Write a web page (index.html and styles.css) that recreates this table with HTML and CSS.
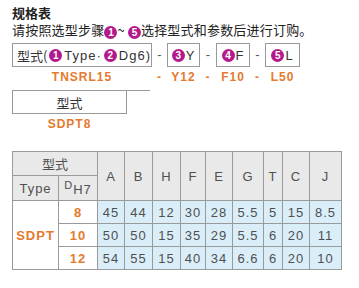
FILE: index.html
```
<!DOCTYPE html>
<html lang="zh">
<head>
<meta charset="utf-8">
<link rel="stylesheet" href="styles.css">
</head>
<body>
<div class="page">
  <div class="title">规格表</div>
  <div class="intro">请按照选型步骤<span class="num">1</span>~ <span class="num">5</span>选择型式和参数后进行订购。</div>
  <div class="order">
    <div class="box box-main">型式(<span class="num">1</span><span class="lat">Type·</span><span class="num">2</span><span class="lat">Dg6)</span></div>
    <div class="dash">-</div>
    <div class="box"><span class="num">3</span><span class="lat">Y</span></div>
    <div class="dash">-</div>
    <div class="box"><span class="num">4</span><span class="lat">F</span></div>
    <div class="dash">-</div>
    <div class="box"><span class="num">5</span><span class="lat">L</span></div>
    <div class="code">TNSRL15</div>
    <div class="code">-</div>
    <div class="code">Y12</div>
    <div class="code">-</div>
    <div class="code">F10</div>
    <div class="code">-</div>
    <div class="code">L50</div>
  </div>
  <div class="example">
    <div class="example-row">
      <div class="box box-type">型式</div>
      <div class="tail"></div>
    </div>
    <div class="code code-ex">SDPT8</div>
  </div>
  <table class="spec">
    <colgroup>
      <col style="width:46px"><col style="width:39px"><col style="width:27px"><col style="width:28px"><col style="width:28px"><col style="width:25px"><col style="width:27px"><col style="width:31px"><col style="width:19px"><col style="width:27px"><col style="width:32px">
    </colgroup>
    <tr class="h1">
      <th colspan="2" class="cjk">型式</th>
      <th rowspan="2">A</th><th rowspan="2">B</th><th rowspan="2">H</th><th rowspan="2">F</th><th rowspan="2">E</th><th rowspan="2">G</th><th rowspan="2">T</th><th rowspan="2">C</th><th rowspan="2">J</th>
    </tr>
    <tr class="h2">
      <th>Type</th>
      <th><span class="d">D</span><span class="sub">H7</span></th>
    </tr>
    <tr>
      <td rowspan="3" class="o">SDPT</td>
      <td class="o">8</td>
      <td class="v">45</td><td class="v">44</td><td class="v">12</td><td class="v">30</td><td class="v">28</td><td class="v">5.5</td><td class="v">5</td><td class="v">15</td><td class="v">8.5</td>
    </tr>
    <tr>
      <td class="o">10</td>
      <td class="v">50</td><td class="v">50</td><td class="v">15</td><td class="v">35</td><td class="v">29</td><td class="v">5.5</td><td class="v">6</td><td class="v">20</td><td class="v">11</td>
    </tr>
    <tr>
      <td class="o">12</td>
      <td class="v">54</td><td class="v">55</td><td class="v">15</td><td class="v">40</td><td class="v">34</td><td class="v">6.6</td><td class="v">6</td><td class="v">20</td><td class="v">10</td>
    </tr>
  </table>
</div>
</body>
</html>
```
FILE: styles.css
```
html, body {
  margin: 0;
  padding: 0;
  background: #fff;
}
.page {
  padding: 5px 0 0 12px;
  font-family: "Noto Sans CJK SC", "Liberation Sans", sans-serif;
  color: #222;
  font-size: 13px;
}
.title {
  font-weight: bold;
  line-height: 16px;
  height: 16px;
}
.intro {
  line-height: 16px;
  height: 16px;
  margin-top: 1px;
  letter-spacing: 0.2px;
}
.num {
  display: inline-block;
  width: 13px;
  height: 13px;
  border-radius: 50%;
  background: #b3198b;
  color: #fff;
  font-family: "Liberation Sans", sans-serif;
  font-weight: bold;
  font-size: 10px;
  line-height: 13px;
  text-align: center;
  vertical-align: -1px;
  letter-spacing: 0;
}
.lat {
  font-family: "Liberation Sans", sans-serif;
  letter-spacing: 1px;
}
.order {
  margin-top: 5px;
  display: grid;
  grid-template-columns: 140px 15px 33px 16px 34px 15px 35px;
  grid-template-rows: 24px 23px;
}
.box {
  border: 1px solid #999;
  box-sizing: border-box;
  display: flex;
  align-items: center;
  justify-content: center;
  gap: 1px;
  white-space: nowrap;
  color: #333;
}
.box-main {
  justify-content: flex-start;
  padding-left: 4px;
  gap: 2px;
}
.dash {
  text-align: center;
  line-height: 24px;
  font-family: "Liberation Sans", sans-serif;
  color: #555;
}
.code {
  text-align: center;
  line-height: 21px;
  font-family: "Liberation Sans", sans-serif;
  font-weight: bold;
  font-size: 12px;
  letter-spacing: 1px;
  color: #e57a2d;
  white-space: nowrap;
}
.example {
  width: 115px;
}
.example-row {
  display: flex;
  align-items: flex-start;
}
.box-type {
  width: 115px;
  height: 24px;
  flex: none;
}
.tail {
  flex: none;
  width: 23px;
  border-top: 1px solid #999;
}
.code-ex {
  line-height: 21px;
}
.spec {
  margin-top: 16px;
  border-collapse: collapse;
  table-layout: fixed;
  width: 330px;
  font-family: "Liberation Sans", sans-serif;
  font-size: 13px;
  color: #505050;
}
.spec th, .spec td {
  border: 1px solid #9a9a9a;
  padding: 0;
  text-align: center;
  letter-spacing: 1px;
}
.spec th {
  background: #e9e9e9;
  font-weight: normal;
}
.spec .cjk {
  font-family: "Noto Sans CJK SC", sans-serif;
  letter-spacing: 0;
}
.h1 th { height: 23px; }
.h2 th { height: 24px; }
.spec td { height: 22px; }
.spec td.o {
  background: #fff;
  color: #e57a2d;
  font-weight: bold;
}
.spec td.v {
  background: #daeefa;
}
.d {
  font-size: 11px;
  vertical-align: 3px;
}
.sub {
  font-size: 13px;
  vertical-align: -2px;
}
```
